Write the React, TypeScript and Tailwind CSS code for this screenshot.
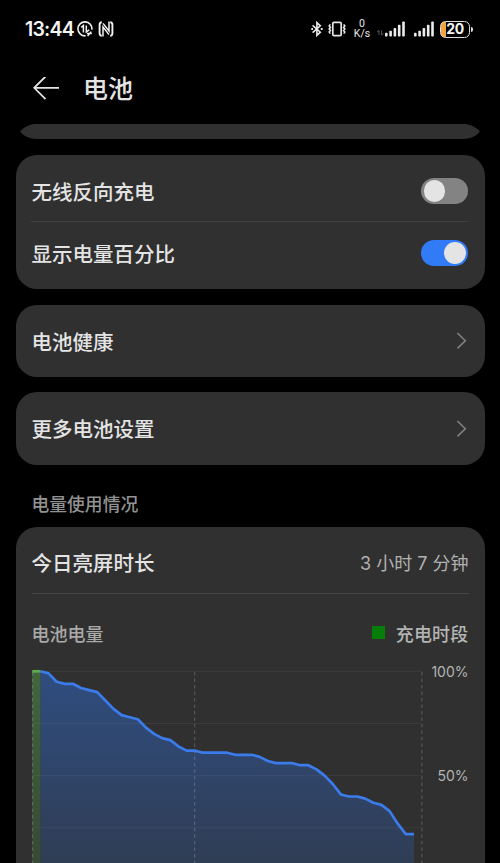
import React from 'react';

const levels = [
  100, 100, 99, 95, 94, 94, 92, 91, 90, 86, 82, 79, 78, 77, 73, 70, 68, 67, 64, 62, 62, 61, 61, 61,
  61, 60, 60, 60, 59, 57, 56, 56, 56, 55, 55, 53, 50, 46, 41, 40, 40, 39, 37, 36, 33, 27, 22, 22,
];

const STEP = 8.12;
const TOP = 4.3;
const px = (i: number) => 0.3 + i * STEP;
const py = (v: number) => TOP + (100 - v) * 2.087;

const DataSyncIcon = () => (
  <svg width="16" height="16" viewBox="0 0 16 16" fill="none" stroke="#f2f2f2" strokeWidth="1.6">
    <path d="M8.6 14.8 A7 7 0 1 1 14.9 8.6" />
    <path d="M4.2 6.4 L6.4 4.6 V11.4 M9.3 4.4 V11 L12.2 8.8" strokeWidth="1.5" />
    <path d="M9.8 12.4 H14.8 M10.6 15 L14.2 10.6" strokeWidth="1.5" />
  </svg>
);

const NfcIcon = () => (
  <svg width="16" height="16" viewBox="0 0 16 16" fill="none" stroke="#f2f2f2">
    <path d="M3.8 1.3 Q1.6 1.3 1.6 3.8 V12.2 Q1.6 14.7 3.8 14.7" strokeWidth="1.9" />
    <path d="M12.2 14.7 Q14.4 14.7 14.4 12.2 V3.8 Q14.4 1.3 12.2 1.3" strokeWidth="1.9" />
    <path d="M5 15.4 V6 L11 13.6" strokeWidth="1.5" />
    <path d="M5 2.4 L11 10 V0.6" strokeWidth="1.5" />
  </svg>
);

const BluetoothIcon = () => (
  <svg width="12" height="16" viewBox="0 0 12 16" fill="none" stroke="#e8e8e8" strokeWidth="1.6">
    <path d="M1.6 4.3 L9.3 11.2 L5.9 14.4 V1.6 L9.3 4.8 L1.6 11.7" />
    <path d="M0.3 8 H2 M9.8 8 H11.6" strokeWidth="1.8" />
  </svg>
);

const VibrateIcon = () => (
  <svg width="20" height="16" viewBox="0 0 20 16" fill="none" stroke="#e8e8e8" strokeWidth="1.7">
    <rect x="5.8" y="1.3" width="8.4" height="13.4" rx="1.2" />
    <path d="M3.3 3.4 L2.2 5 L3.4 6.5 L2.2 8 L3.4 9.5 L2.2 11 L3.3 12.6" strokeWidth="1.6" />
    <path d="M16.7 3.4 L17.8 5 L16.6 6.5 L17.8 8 L16.6 9.5 L17.8 11 L16.7 12.6" strokeWidth="1.6" />
  </svg>
);

const SignalIcon = () => (
  <svg width="20" height="16" viewBox="0 0 20 16" fill="#ececec">
    <rect x="0" y="11.8" width="2.6" height="3.8" rx="0.8" />
    <rect x="4.3" y="9.8" width="2.6" height="5.8" rx="0.8" />
    <rect x="8.6" y="7" width="2.6" height="8.6" rx="0.8" />
    <rect x="12.9" y="3.8" width="2.6" height="11.8" rx="0.8" />
    <rect x="17.2" y="0.4" width="2.6" height="15.2" rx="0.8" />
  </svg>
);

const StatusBar = () => (
  <div className="flex h-[58px] items-center pl-[25px] pr-[27px]">
    <span className="w-[52px] pt-px font-['Inter'] text-[19.5px] leading-none font-semibold tracking-[-0.8px] text-[#f4f4f4]">13:44</span>
    <DataSyncIcon />
    <div className="ml-[5px]">
      <NfcIcon />
    </div>
    <div className="ml-auto flex items-center">
      <BluetoothIcon />
      <div className="ml-[4px]">
        <VibrateIcon />
      </div>
      <div className="ml-[7px] flex w-[16px] flex-col items-center font-['Roboto'] text-[10.5px] leading-[10.5px] font-normal text-[#e8e8e8]">
        <span>0</span>
        <span>K/s</span>
      </div>
      <svg className="ml-[7px]" width="7" height="16" viewBox="0 0 7 16" fill="none" stroke="#555" strokeWidth="1">
        <path d="M0 11 L2 9.5 V14 M4.5 9.5 V14 L6.5 12.5" />
      </svg>
      <div className="ml-px">
        <SignalIcon />
      </div>
      <div className="ml-[9px]">
        <SignalIcon />
      </div>
      <div className="ml-[6px] flex h-[17px] w-[30px] items-center justify-center overflow-hidden rounded-[5.5px] border-[1.5px] border-[#dedede] bg-gradient-to-r from-[#f2a33c] from-[5.5px] to-black to-[5.5px]">
        <span className="font-['Inter'] text-[14px] leading-none font-bold tracking-[-0.5px] text-[#f4f4f4]">20</span>
      </div>
      <div className="ml-px h-[5px] w-[2px] rounded-r-sm bg-[#dedede]" />
    </div>
  </div>
);

const Toggle = ({ on = false }: { on?: boolean }) => (
  <div className={`flex h-[26px] w-[47px] items-center rounded-full px-[2.5px] ${on ? 'justify-end bg-[#327bf6]' : 'bg-[#838383]'}`}>
    <div className="h-[21.5px] w-[21.5px] rounded-full bg-[#e4e4e4]" />
  </div>
);

const Chevron = () => (
  <svg width="12" height="20" viewBox="0 0 12 20" fill="none" stroke="#808080" strokeWidth="1.6">
    <path d="M1.4 2 L9.3 9.7 L1.4 17.4" />
  </svg>
);

const LinkCard = ({ label }: { label: string }) => (
  <div className="flex h-[72.3px] items-center justify-between rounded-[21px] bg-[#303030] pr-[17px] pl-[16px]">
    <span>{label}</span>
    <Chevron />
  </div>
);

const BatteryChart = () => {
  const points = levels.map((v, i) => `${px(i)},${py(v)}`);
  const line = points.slice(1).join(' ');
  return (
    <svg width="392" height="210" viewBox="0 0 392 210" fill="none">
      <defs>
        <linearGradient id="level" x1="0" y1="0" x2="0" y2="1">
          <stop offset="0" stopColor="#2f4d80" />
          <stop offset="1" stopColor="#303c51" />
        </linearGradient>
        <linearGradient id="charge" x1="0" y1="0" x2="0" y2="1">
          <stop offset="0" stopColor="#41663d" />
          <stop offset="1" stopColor="#374734" />
        </linearGradient>
      </defs>
      <polygon points={`${px(1)},210 ${line} ${px(47)},210`} fill="url(#level)" />
      <rect x={px(0)} y={TOP} width={STEP} height="206" fill="url(#charge)" />
      {[100, 75, 50, 25].map((v) => (
        <path key={v} d={`M0 ${py(v)} H390`} stroke="#fff" strokeOpacity="0.06" />
      ))}
      {[0.7, 162.7, 389.9].map((x) => (
        <path key={x} d={`M${x} 5 V210`} stroke="#fff" strokeOpacity="0.22" strokeDasharray="3.4 3.1" />
      ))}
      <polyline points={line} stroke="#3b7bea" strokeWidth="2.7" strokeLinejoin="round" />
      <path d={`M${px(0)} ${TOP} H${px(1)}`} stroke="#5eab51" strokeWidth="2.7" />
    </svg>
  );
};

const App = () => {
  return (
    <div className="h-[863px] w-[500px] overflow-hidden bg-black font-['Noto_Sans_CJK_SC',sans-serif] text-[20.5px] leading-none font-medium text-[#e4e4e4]">
      <StatusBar />
      <header className="flex h-[66px] items-start pt-[17px] pl-[32.5px]">
        <svg className="mt-0.5" width="27" height="24" viewBox="0 0 27 24" fill="none" stroke="#e4e4e4" strokeWidth="1.8">
          <path d="M26 10.8 H1.5 M12.5 -0.5 L1.2 10.8 L12.5 22.2" />
        </svg>
        <h1 className="ml-[23.5px] text-[25px] leading-none">电池</h1>
      </header>

      <main className="px-[15.5px]">
        {/* bottom edge of the card scrolled under the header */}
        <div className="flex h-[15px] justify-center">
          <svg width="460" height="15" viewBox="0 0 460 15" fill="#303030">
            <path d="M14 0 H446 Q455 1.5 460 7.5 Q454 15 443 15 H17 Q6 15 0 7.5 Q5 1.5 14 0 Z" />
          </svg>
        </div>

        <section className="mt-[15.7px] h-[134.5px] rounded-[21px] bg-[#303030] pr-[16.2px] pl-[15.9px] pt-[5px]">
          <div className="flex h-[61.5px] items-center justify-between pt-px">
            <span>无线反向充电</span>
            <Toggle />
          </div>
          <div className="h-px bg-[#404040]" />
          <div className="flex h-[62px] items-center justify-between">
            <span>显示电量百分比</span>
            <Toggle on />
          </div>
        </section>

        <div className="mt-[15.6px] flex flex-col gap-[15.3px]">
          <LinkCard label="电池健康" />
          <LinkCard label="更多电池设置" />
        </div>

        <h2 className="mt-[29.5px] pl-[16px] text-[17.8px] leading-[18px] text-[#929292]">电量使用情况</h2>

        <section className="mt-[14.8px] h-[380px] rounded-[21px] bg-[#303030] px-[16px]">
          <div className="flex h-[67px] items-center justify-between border-b border-[#454545] pt-[5px]">
            <span>今日亮屏时长</span>
            <span className="pt-[3px] font-['Inter','Noto_Sans_CJK_SC',sans-serif] text-[18px] font-normal text-[#b0b0b0]">3 小时 7 分钟</span>
          </div>
          <div className="flex h-[73px] items-center justify-between pt-[5px] text-[18px] text-[#a9a9a9]">
            <span>电池电量</span>
            <div className="flex items-center gap-[10.5px] text-[#b4b4b4]">
              <div className="h-[13px] w-[13.5px] bg-[#067d06]" />
              <span className="tracking-[0.2px]">充电时段</span>
            </div>
          </div>
          <div className="flex justify-between">
            <BatteryChart />
            <div className="-mt-[1.5px] flex flex-col items-end gap-[90px] font-['Inter'] text-[14px] leading-[14px] font-normal text-[#b4b4b4]">
              <span>100%</span>
              <span>50%</span>
            </div>
          </div>
        </section>
      </main>
    </div>
  );
};

export default App;
